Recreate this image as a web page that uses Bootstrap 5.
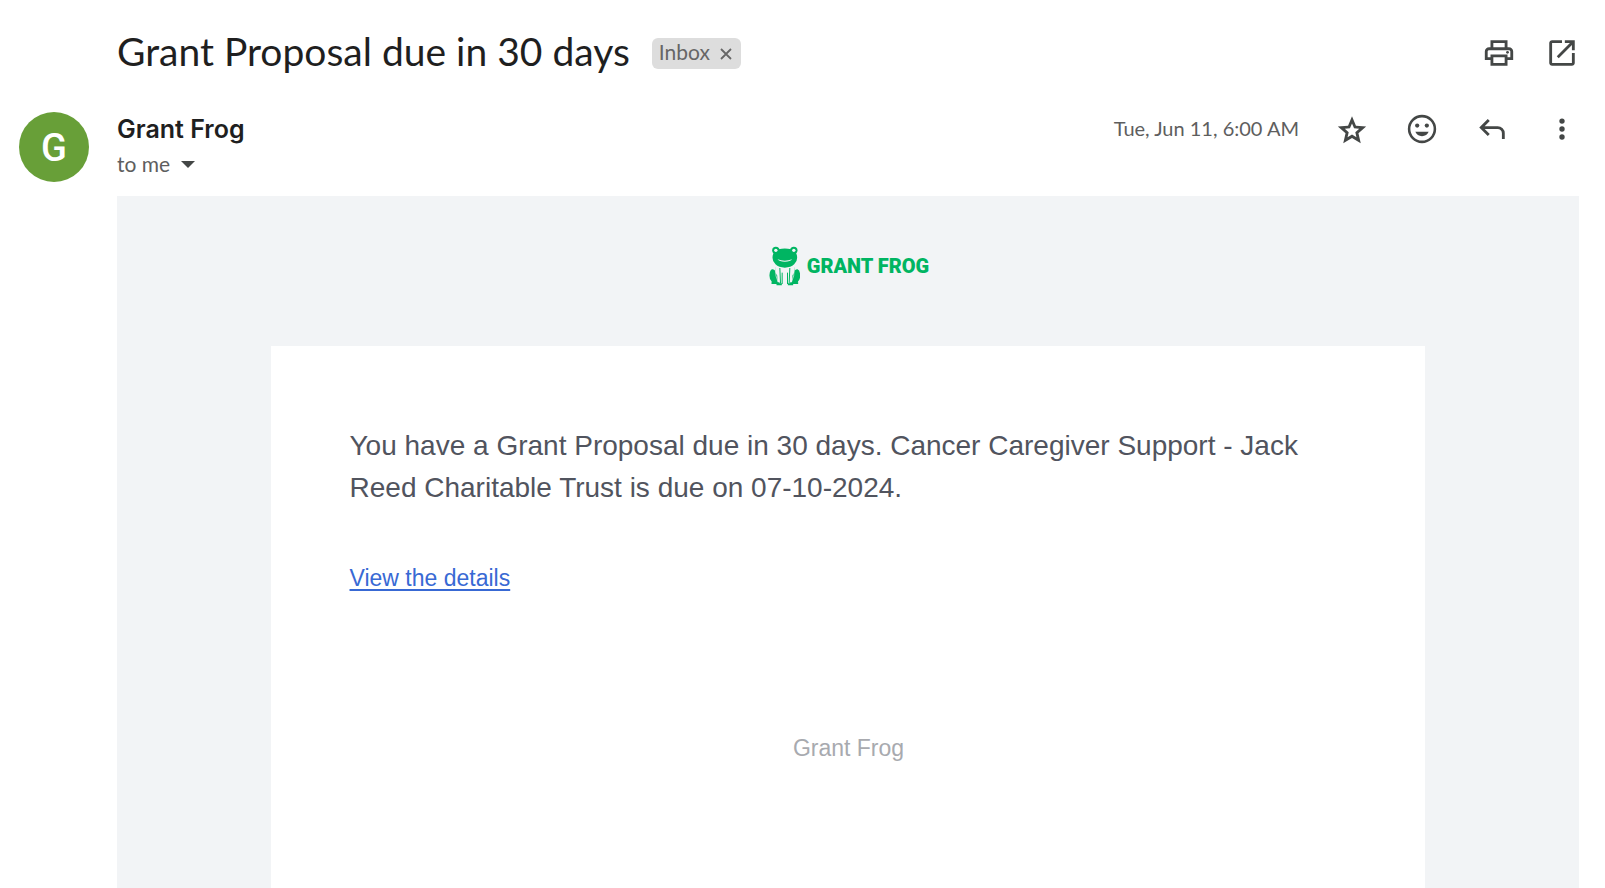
<!DOCTYPE html>
<html lang="en">
<head>
<meta charset="utf-8">
<meta name="viewport" content="width=device-width, initial-scale=1">
<title>Grant Proposal due in 30 days</title>
<link href="https://cdn.jsdelivr.net/npm/bootstrap@5.3.0/dist/css/bootstrap.min.css" rel="stylesheet">
<style>
body{font-family:Lato,"Liberation Sans",sans-serif;color:#1f1f1f;background:#fff}
.mail{padding-right:26px}
.gutter{width:117px;flex:none}
.subject-row{padding-top:30px}
.subject{font-size:39px;line-height:42px;font-weight:400;padding-bottom:4px}
.chip{background:#ddd;color:#666;border-radius:6px;height:31px;padding:0 8px 3px 7px;font-size:21px;line-height:28px;margin-left:22px}
.chip-x,.icon-btn,.to-btn{border:0;background:none;padding:0;color:inherit}
.chip-x svg,.icon-btn svg{display:block}
.icon-btn{width:34px;height:34px;color:#444746}
.tools{gap:29px}
.sender-row{padding-top:36px;height:120px}
.avatar{width:70px;height:70px;margin-left:19px;background:#689f38;color:#fff;font:500 38px/72px Roboto,sans-serif}
.sender{font:600 25px/35px Inter,sans-serif}
.to-btn{color:#5e5e5e;font-size:21px;line-height:34px;gap:11px}
.stamp{color:#5e5e5e;font-size:20px;line-height:32px}
.actions{gap:36px}
.mail-body{margin-left:117px;background:#f2f4f6;font-family:"Liberation Sans",sans-serif;padding-top:49px}
.brand{color:#00b562;gap:7px;font:900 20px/42px Roboto,sans-serif;margin-bottom:59px;padding-left:2px}
.sheet{width:79%;background:#fff;padding:79px 78px 79px 79px}
.message{color:#51545e;font-size:28px;line-height:42px;margin-bottom:52px}
.details{color:#3869d4;font-size:23px;line-height:34px;text-decoration-thickness:2px;text-underline-offset:3px}
.foot{color:#a8aaaf;font-size:23px;line-height:34px;margin-top:136px}
</style>
</head>
<body>
<main class="mail d-flex flex-column min-vh-100">
  <header class="subject-row d-flex align-items-center">
    <div class="gutter"></div>
    <h1 class="subject mb-0">Grant Proposal due in 30 days</h1>
    <span class="chip d-inline-flex align-items-center justify-content-between gap-2">Inbox
      <button class="chip-x" type="button" aria-label="Remove label Inbox"><svg width="15" height="28" viewBox="0 0 15 28" fill="none" stroke="currentColor" stroke-width="1.800"><path d="M3 11l10 10M13 11l-10 10"/></svg></button>
    </span>
    <div class="tools d-flex ms-auto">
      <button class="icon-btn" type="button" aria-label="Print"><svg width="34" height="34" viewBox="0 0 24 24" fill="currentColor"><path d="M19 8h-1V3H6v5H5c-1.660 0-3 1.340-3 3v6h4v4h12v-4h4v-6c0-1.660-1.340-3-3-3zM8 5h8v3H8V5zm8 14H8v-4h8v4zm2-4v-2H6v2H4v-4c0-.55.45-1 1-1h14c.55 0 1 .45 1 1v4h-2z"/><circle cx="18" cy="11.500" r="1"/></svg></button>
      <button class="icon-btn" type="button" aria-label="Open in new window"><svg width="34" height="34" viewBox="0 0 24 24" fill="currentColor"><path d="M5 21q-.825 0-1.412-.587Q3 19.825 3 19V5q0-.825.588-1.412Q4.175 3 5 3h7v2H5v14h14v-7h2v7q0 .825-.587 1.413Q19.825 21 19 21Zm4.700-5.300-1.400-1.400L17.600 5H14V3h7v7h-2V6.400Z"/></svg></button>
    </div>
  </header>

  <section class="sender-row d-flex align-items-start">
    <div class="gutter"><div class="avatar rounded-circle text-center">G</div></div>
    <div>
      <div class="sender">Grant Frog</div>
      <button class="to-btn d-flex align-items-center" type="button">to me
        <svg width="14" height="7" viewBox="0 0 14 7" fill="#444746" aria-hidden="true"><path d="M0 0h14L7 7z"/></svg>
      </button>
    </div>
    <div class="actions d-flex ms-auto">
      <time class="stamp" datetime="2024-06-11T06:00">Tue, Jun 11, 6:00 AM</time>
      <button class="icon-btn" type="button" aria-label="Star"><svg width="34" height="34" viewBox="0 0 24 24" fill="currentColor"><path d="m8.850 17.825 3.150-1.900 3.150 1.925-.825-3.600 2.775-2.400-3.650-.325-1.450-3.400-1.450 3.375-3.650.325 2.775 2.425ZM5.825 22l1.625-7.025L2 10.250l7.200-.625L12 3l2.800 6.625 7.200.625-5.450 4.725L18.175 22 12 18.275Z"/></svg></button>
      <button class="icon-btn" type="button" aria-label="Add reaction"><svg width="34" height="34" viewBox="0 0 24 24"><circle cx="12" cy="12" r="9.100" fill="none" stroke="currentColor" stroke-width="1.800"/><g fill="currentColor"><circle cx="8.600" cy="9.600" r="1.500"/><circle cx="15.400" cy="9.600" r="1.500"/><path d="M7.300 14h9.400c-.7 1.900-2.500 3.100-4.700 3.100S8 15.900 7.300 14z"/></g></svg></button>
      <button class="icon-btn" type="button" aria-label="Reply"><svg width="34" height="34" viewBox="0 0 24 24" fill="currentColor"><path d="M19 19v-4q0-1.250-.875-2.125T16 12H6.825l3.600 3.600L9 17l-6-6 6-6 1.425 1.400-3.600 3.600H16q2.075 0 3.538 1.463Q21 12.925 21 15v4Z"/></svg></button>
      <button class="icon-btn" type="button" aria-label="More"><svg width="34" height="34" viewBox="0 0 24 24" fill="currentColor"><circle cx="12" cy="6.400" r="1.900"/><circle cx="12" cy="12" r="1.900"/><circle cx="12" cy="17.600" r="1.900"/></svg></button>
    </div>
  </section>

  <article class="mail-body d-flex flex-column align-items-center flex-grow-1">
    <div class="brand d-flex align-items-center">
      <svg width="31" height="40" viewBox="44 30 92 120" aria-hidden="true">
        <g fill="currentColor">
          <circle cx="64" cy="43" r="11"/><circle cx="118" cy="43" r="11"/>
          <path d="M72 40q19-5 38 0 18 6 18 25 0 12-9 20-10 10-28 10T63 85q-9-8-9-20 0-19 18-25z"/>
          <path d="M63 93q-4 14 5 25l2 24H53l-2-6q-7-8-6-20 1-14 8-16 5-1 10 5zM119 93q4 14-5 25l-2 24h17l2-6q7-8 6-20-1-14-8-16-5-1-10 5z"/>
          <path d="M51 139h24v5H51zM107 139h24v5h-24zM66 142h16v6H66zM100 142h16v6h-16z"/>
        </g>
        <g fill="none" stroke="currentColor" stroke-width="3"><path d="M76 96l2 46M83 110v34M106 96l-2 46M99 110v34"/></g>
        <circle cx="64" cy="43" r="5" fill="#f2f4f6"/><circle cx="118" cy="43" r="5" fill="#f2f4f6"/>
        <path d="M69 70q22 8 44 0-5 7-22 7t-22-7z" fill="#f2f4f6"/>
        <path d="M63 96q-1 26 8 42M119 96q1 26-8 42" fill="none" stroke="#f2f4f6" stroke-width="2"/>
      </svg>
      <span>GRANT FROG</span>
    </div>
    <div class="sheet flex-grow-1">
      <p class="message">You have a Grant Proposal due in 30 days. Cancer Caregiver Support - Jack Reed Charitable Trust is due on 07-10-2024.</p>
      <a class="details" href="#">View the details</a>
      <p class="foot text-center mb-0">Grant Frog</p>
    </div>
  </article>
</main>
<script src="https://cdn.jsdelivr.net/npm/bootstrap@5.3.0/dist/js/bootstrap.bundle.min.js"></script>
</body>
</html>
